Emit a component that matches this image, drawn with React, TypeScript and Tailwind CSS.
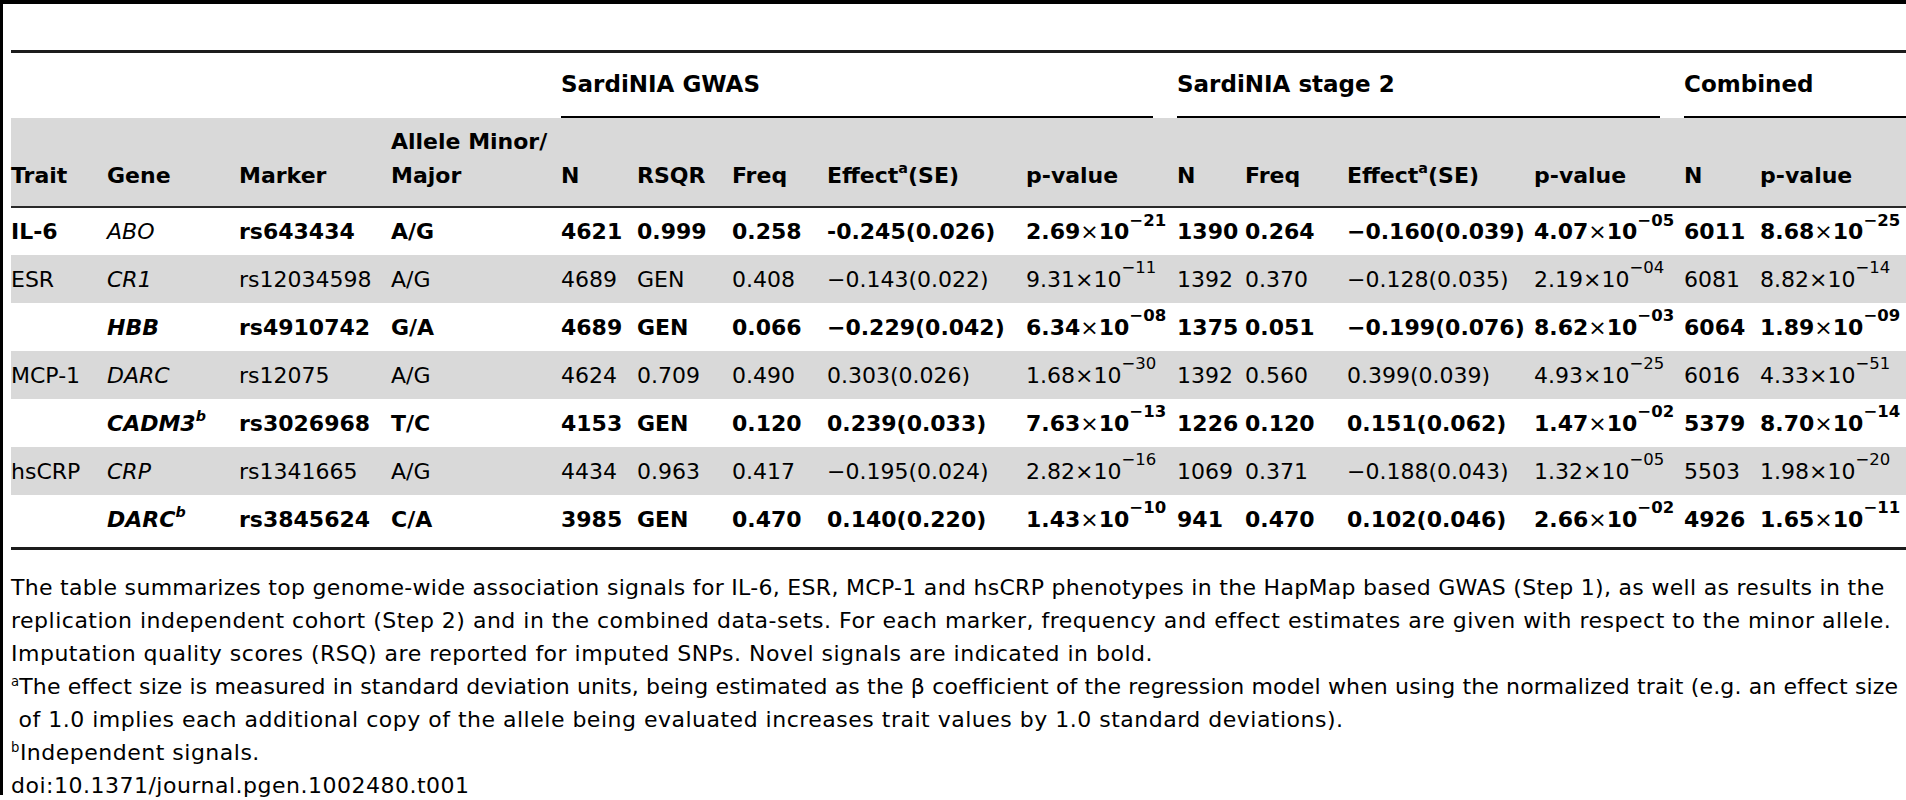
import React from "react";

type PV = [string, string];

type Row = {
  trait: string;
  gene: string;
  sup?: string;
  marker: string;
  allele: string;
  n1: string;
  rsqr: string;
  f1: string;
  e1: string;
  p1: PV;
  n2: string;
  f2: string;
  e2: string;
  p2: PV;
  n3: string;
  p3: PV;
  bold?: boolean;
  geneBold?: boolean;
};

const rows: Row[] = [
  { trait: "IL-6", gene: "ABO", marker: "rs643434", allele: "A/G", n1: "4621", rsqr: "0.999", f1: "0.258", e1: "-0.245(0.026)", p1: ["2.69", "−21"], n2: "1390", f2: "0.264", e2: "−0.160(0.039)", p2: ["4.07", "−05"], n3: "6011", p3: ["8.68", "−25"], bold: true },
  { trait: "ESR", gene: "CR1", marker: "rs12034598", allele: "A/G", n1: "4689", rsqr: "GEN", f1: "0.408", e1: "−0.143(0.022)", p1: ["9.31", "−11"], n2: "1392", f2: "0.370", e2: "−0.128(0.035)", p2: ["2.19", "−04"], n3: "6081", p3: ["8.82", "−14"] },
  { trait: "", gene: "HBB", marker: "rs4910742", allele: "G/A", n1: "4689", rsqr: "GEN", f1: "0.066", e1: "−0.229(0.042)", p1: ["6.34", "−08"], n2: "1375", f2: "0.051", e2: "−0.199(0.076)", p2: ["8.62", "−03"], n3: "6064", p3: ["1.89", "−09"], bold: true, geneBold: true },
  { trait: "MCP-1", gene: "DARC", marker: "rs12075", allele: "A/G", n1: "4624", rsqr: "0.709", f1: "0.490", e1: "0.303(0.026)", p1: ["1.68", "−30"], n2: "1392", f2: "0.560", e2: "0.399(0.039)", p2: ["4.93", "−25"], n3: "6016", p3: ["4.33", "−51"] },
  { trait: "", gene: "CADM3", sup: "b", marker: "rs3026968", allele: "T/C", n1: "4153", rsqr: "GEN", f1: "0.120", e1: "0.239(0.033)", p1: ["7.63", "−13"], n2: "1226", f2: "0.120", e2: "0.151(0.062)", p2: ["1.47", "−02"], n3: "5379", p3: ["8.70", "−14"], bold: true, geneBold: true },
  { trait: "hsCRP", gene: "CRP", marker: "rs1341665", allele: "A/G", n1: "4434", rsqr: "0.963", f1: "0.417", e1: "−0.195(0.024)", p1: ["2.82", "−16"], n2: "1069", f2: "0.371", e2: "−0.188(0.043)", p2: ["1.32", "−05"], n3: "5503", p3: ["1.98", "−20"] },
  { trait: "", gene: "DARC", sup: "b", marker: "rs3845624", allele: "C/A", n1: "3985", rsqr: "GEN", f1: "0.470", e1: "0.140(0.220)", p1: ["1.43", "−10"], n2: "941", f2: "0.470", e2: "0.102(0.046)", p2: ["2.66", "−02"], n3: "4926", p3: ["1.65", "−11"], bold: true, geneBold: true },
];

// column widths, left edges taken from the reference
const cols = [96, 132, 152, 170, 76, 95, 95, 199, 151, 68, 102, 187, 150, 76, 200];

function PValue({ v }: { v: PV }) {
  return (
    <span>
      {v[0]}
      <span className="font-normal">×</span>10
      <sup className="relative top-[-0.8em] text-[0.75em] leading-none">{v[1]}</sup>
    </span>
  );
}

function GroupHead({ label, gap }: { label: string; gap?: boolean }) {
  return (
    <div
      className={`flex h-[65px] items-center border-b-2 border-black text-[23px] font-bold ${gap ? "mr-[24px]" : ""}`}
    >
      {label}
    </div>
  );
}

function EffectHead() {
  return (
    <>
      Effect<sup className="relative top-[-0.7em] text-[0.65em] leading-none">a</sup>(SE)
    </>
  );
}

export default function App() {
  const th = "h-[89px] p-0 pb-[13px] text-left align-bottom font-bold leading-[34px] whitespace-nowrap";
  const td = "h-[48px] p-0 text-left align-middle whitespace-nowrap";

  return (
    <div className="h-[800px] w-[1906px] overflow-hidden bg-white font-['DejaVu_Sans',sans-serif] text-black">
      <div className="h-[795px] border-t-4 border-l-[3px] border-black pl-2">
        <div className="mt-[46px] h-[3px] bg-[#1c1c1c]" />

        <table className="table-fixed border-collapse text-[22px]" style={{ width: cols.reduce((a, b) => a + b, 0) }}>
          <colgroup>
            {cols.map((w, i) => (
              <col key={i} style={{ width: w }} />
            ))}
          </colgroup>
          <thead>
            <tr>
              <td colSpan={4} className="p-0" />
              <td colSpan={5} className="p-0 align-top">
                <GroupHead label="SardiNIA GWAS" gap />
              </td>
              <td colSpan={4} className="p-0 align-top">
                <GroupHead label="SardiNIA stage 2" gap />
              </td>
              <td colSpan={2} className="p-0 align-top">
                <GroupHead label="Combined" />
              </td>
            </tr>
            <tr className="border-b-2 border-[#2a2a2a] bg-[#d9d9d9]">
              <th className={th}>Trait</th>
              <th className={th}>Gene</th>
              <th className={th}>Marker</th>
              <th className={th}>
                Allele Minor/
                <br />
                Major
              </th>
              <th className={th}>N</th>
              <th className={th}>RSQR</th>
              <th className={th}>Freq</th>
              <th className={th}>
                <EffectHead />
              </th>
              <th className={th}>p-value</th>
              <th className={th}>N</th>
              <th className={th}>Freq</th>
              <th className={th}>
                <EffectHead />
              </th>
              <th className={th}>p-value</th>
              <th className={th}>N</th>
              <th className={th}>p-value</th>
            </tr>
          </thead>
          <tbody>
            {rows.map((r, i) => (
              <tr
                key={i}
                className={`${i % 2 === 1 ? "bg-[#d9d9d9]" : "bg-white"} ${r.bold ? "font-bold" : "font-normal"}`}
              >
                <td className={td}>{r.trait}</td>
                <td className={`${td} italic ${r.geneBold ? "font-bold" : "font-normal"}`}>
                  {r.gene}
                  {r.sup && (
                    <sup className="relative top-[-0.7em] text-[0.65em] leading-none">{r.sup}</sup>
                  )}
                </td>
                <td className={td}>{r.marker}</td>
                <td className={td}>{r.allele}</td>
                <td className={td}>{r.n1}</td>
                <td className={td}>{r.rsqr}</td>
                <td className={td}>{r.f1}</td>
                <td className={td}>{r.e1}</td>
                <td className={td}>
                  <PValue v={r.p1} />
                </td>
                <td className={td}>{r.n2}</td>
                <td className={td}>{r.f2}</td>
                <td className={td}>{r.e2}</td>
                <td className={td}>
                  <PValue v={r.p2} />
                </td>
                <td className={td}>{r.n3}</td>
                <td className={td}>
                  <PValue v={r.p3} />
                </td>
              </tr>
            ))}
          </tbody>
        </table>

        <div className="mt-[4px] h-[3px] bg-[#1c1c1c]" />

        {/* footnote block */}
        <div className="mt-[21px] text-[22px] leading-[33px] tracking-[0.5px]">
          <div className="whitespace-nowrap tracking-[0.3px]">
            The table summarizes top genome-wide association signals for IL-6, ESR, MCP-1 and hsCRP phenotypes in the HapMap based GWAS (Step 1), as well as results in the
          </div>
          <div className="whitespace-nowrap">
            replication independent cohort (Step 2) and in the combined data-sets. For each marker, frequency and effect estimates are given with respect to the minor allele.
          </div>
          <div className="whitespace-nowrap">
            Imputation quality scores (RSQ) are reported for imputed SNPs. Novel signals are indicated in bold.
          </div>
          <div className="whitespace-nowrap tracking-[0.15px]">
            <sup className="relative top-[-0.6em] text-[0.6em] leading-none">a</sup>The effect size is measured in standard deviation units, being estimated as the β coefficient of the regression model when using the normalized trait (e.g. an effect size
          </div>
          <div className="whitespace-pre">
            {" of 1.0 implies each additional copy of the allele being evaluated increases trait values by 1.0 standard deviations)."}
          </div>
          <div className="whitespace-nowrap">
            <sup className="relative top-[-0.6em] text-[0.6em] leading-none">b</sup>Independent signals.
          </div>
          <div className="whitespace-nowrap">doi:10.1371/journal.pgen.1002480.t001</div>
        </div>
      </div>
    </div>
  );
}
